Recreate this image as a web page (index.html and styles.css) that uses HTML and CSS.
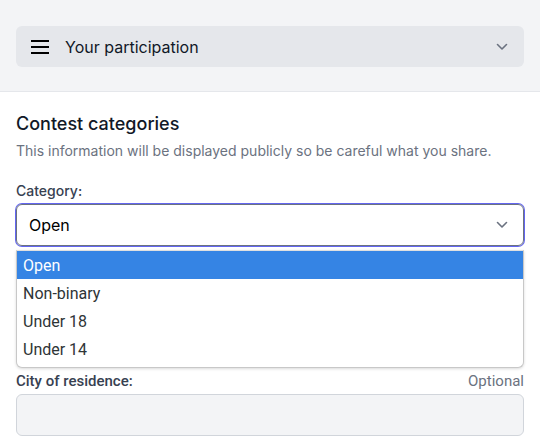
FILE: index.html
```html
<!DOCTYPE html>
<html lang="en">
<head>
  <meta charset="UTF-8" />
  <meta name="viewport" content="width=device-width, initial-scale=1.0"/>
  <title>Contest entry</title>
  <link rel="stylesheet" href="styles.css">
</head>
<body>
  <div class="topbar">
    <div class="step-menu">
      <svg class="burger" width="18" height="14" viewBox="0 0 18 14">
        <path d="M0 1h18M0 7h18M0 13h18" stroke="#000" stroke-width="2"/>
      </svg>
      <span class="step-title">Your participation</span>
      <svg class="chev" width="12" height="8" viewBox="0 0 12 8">
        <path d="M1.5 1.5L6 6l4.5-4.5" fill="none" stroke="#6b7280" stroke-width="1.6" stroke-linecap="round" stroke-linejoin="round"/>
      </svg>
    </div>
  </div>

  <div class="container">
    <h2>Contest categories</h2>
    <p class="hint">This information will be displayed publicly so be careful what you share.</p>

    <div class="field">
      <label>Category:</label>
      <div class="select-wrap">
        <div class="select">
          <span>Open</span>
          <svg class="chev" width="12" height="8" viewBox="0 0 12 8">
            <path d="M1.5 1.5L6 6l4.5-4.5" fill="none" stroke="#6b7280" stroke-width="1.6" stroke-linecap="round" stroke-linejoin="round"/>
          </svg>
        </div>
        <ul class="options">
          <li class="active">Open</li>
          <li>Non-binary</li>
          <li>Under 18</li>
          <li>Under 14</li>
        </ul>
      </div>
    </div>

    <div class="field city">
      <div class="label-row">
        <label>City of residence:</label>
        <span class="optional">Optional</span>
      </div>
      <div class="input"></div>
    </div>
  </div>
</body>
</html>
```

FILE: styles.css
```css
body {
  margin: 0;
  font-family: Inter, sans-serif;
  background: #fff;
  color: #111827;
  overflow: hidden;
}
/* top step bar */
.topbar {
  background: #f3f4f6;
  padding: 26px 16px 24px;
  border-bottom: 1px solid #e5e7eb;
}
.step-menu {
  display: flex;
  align-items: center;
  height: 41px;
  padding: 0 16px 0 15px;
  background: #e5e7eb;
  border-radius: 6px;
}
.burger { margin-right: 16px; }
.step-title { flex: 1; font-size: 16px; color: #111827; }
.chev { flex: none; }
/* form */
.container { padding: 18px 16px 0; }
h2 {
  margin: 0;
  font-size: 18px;
  line-height: 28px;
  font-weight: 500;
}
.hint {
  margin: 3px 0 0;
  font-size: 14px;
  line-height: 20px;
  color: #6b7280;
}
.field { margin-top: 20px; }
.field label {
  display: block;
  font-size: 14px;
  line-height: 20px;
  font-weight: 500;
  color: #374151;
}
.select-wrap { position: relative; margin-top: 3px; }
.select {
  display: flex;
  align-items: center;
  height: 40px;
  padding: 0 15px 0 12px;
  border: 1px solid #6b7280;
  border-radius: 6px;
  box-shadow: 0 0 0 1px #6366f1;
  font-size: 16px;
  color: #000;
}
.select span { flex: 1; }
.options {
  position: absolute;
  top: 46px; left: 0; right: 0;
  margin: 0;
  padding: 0 0 4px;
  list-style: none;
  background: #fff;
  border: 1px solid #c8c8c8;
  border-top-color: #e0e0e0;
  border-radius: 0 0 6px 6px;
  box-shadow: 0 1px 3px rgba(0,0,0,0.15);
  font-family: Roboto, sans-serif;
  font-size: 16px;
  color: #2e3436;
  z-index: 10;
}
.options li {
  height: 28px;
  line-height: 30px;
  padding: 0 6px;
}
.options li.active { background: #3584e4; color: #fff; }
.city { margin-top: 125px; }
.label-row { display: flex; justify-content: space-between; align-items: baseline; }
.city label { font-family: Roboto, sans-serif; font-size: 15px; }
.optional {
  font-family: Roboto, sans-serif;
  font-size: 15px;
  line-height: 20px;
  color: #6b7280;
}
.input {
  margin-top: 3px;
  height: 40px;
  background: #f3f4f6;
  border: 1px solid #d1d5db;
  border-radius: 6px;
}
```
